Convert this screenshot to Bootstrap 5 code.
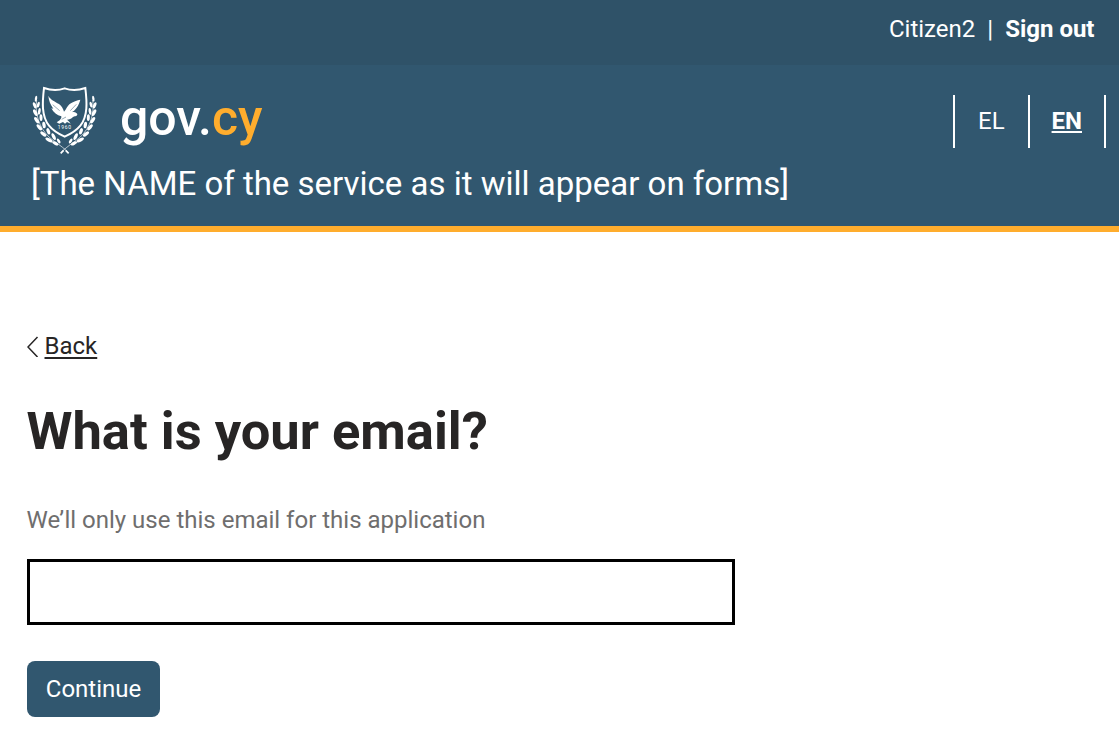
<!DOCTYPE html>
<html lang="en">
<head>
<meta charset="utf-8">
<meta name="viewport" content="width=device-width, initial-scale=1">
<title>What is your email?</title>
<link href="https://cdn.jsdelivr.net/npm/bootstrap@5.3.0/dist/css/bootstrap.min.css" rel="stylesheet">
<style>
  body { font-family: Roboto, sans-serif; font-size: 24px; line-height: 36px; color: #272525; overflow: hidden; }
  .user-bar { height: 65px; background: #2f5268; padding: 11px 24.500px 0 0; }
  .user-bar .divider { margin: 0 12px; }
  .site-header { height: 167px; background: #31576f; border-bottom: 6px solid #ffad2d; padding: 21px 13px 0 32px; }
  .wordmark { font-size: 50px; line-height: 60px; font-weight: 500; margin-left: 23px; margin-top: 2px; }
  .wordmark span { color: #ffad2d; }
  .service-name { font-size: 33px; line-height: 40px; margin: 9px 0 0 -1px; }
  .languages { margin-top: 9px; height: 53px; border-left: 2px solid #fff; }
  .languages a { border-right: 2px solid #fff; padding: 8px 22px 0; color: #fff; }
  .languages a:first-child { padding: 8px 23px 0; }
  .page-main { padding: 96px 27px 0; }
  .back-link { color: #272525; text-underline-offset: 3px; margin-left: 5.500px; }
  h1 { font-size: 52.500px; line-height: 64px; font-weight: 700; margin: 35px 0 0 -.5px; }
  .hint { color: #6f6e6e; margin: 39px 0 21px -.5px; }
  .email-field { width: 708px; height: 66px; border: 3px solid #000; border-radius: 0; }
  .btn-continue { width: 133px; height: 56px; margin-top: 36px; padding: 0; border: 0; border-radius: 8px; background: #31576f; color: #fff; font-size: 24px; }
</style>
</head>
<body>
<div class="user-bar d-flex justify-content-end text-white">
  <span>Citizen2</span><span class="divider">|</span><a href="#" class="fw-bold text-white text-decoration-none">Sign out</a>
</div>
<header class="site-header text-white">
  <div class="d-flex justify-content-between align-items-start">
    <a href="#" class="d-flex text-white text-decoration-none">
      <svg width="65" height="69" viewBox="24 24 195 207" fill="#fff" aria-hidden="true">
        <path d="M60 30Q93 42 122 31Q151 42 184 30C189 72 192 114 169 143C157 158 140 168 122 176C104 168 87 158 75 143C52 114 55 72 60 30Z" fill="none" stroke="#fff" stroke-width="6"/>
        <path d="M73 53C79 65 92 70 105 78C114 84 118 94 120 101C126 95 130 84 137 78C147 70 160 67 169 65C165 82 154 97 143 103C151 99 161 105 160 110C158 116 151 113 147 117C142 123 135 125 129 125C133 128 137 132 140 137L129 132L123 137L117 132L106 137L98 133L107 127C110 123 113 120 112 115C99 112 89 104 82 91L88 92C80 81 74 67 73 53Z"/>
        <path d="M86 80L107 98M157 79L139 98M113 124L126 117" fill="none" stroke="#31576f" stroke-width="1.500"/>
        <text x="122.500" y="153" text-anchor="middle" font-family="Roboto, sans-serif" font-size="15" letter-spacing="2">1960</text>
        <g id="branch">
          <path d="M38 66C32 105 45 149 75 177C91 191 109 201 132 222" fill="none" stroke="#fff" stroke-width="2"/>
          <path d="M110 226L119 217" stroke="#fff" stroke-width="5"/>
          <ellipse cx="36" cy="62" rx="3.500" ry="9" transform="rotate(8 36 62)"/>
          <ellipse cx="32" cy="82" rx="4.500" ry="10" transform="rotate(-20 32 82)"/>
          <ellipse cx="43" cy="80" rx="4" ry="9" transform="rotate(15 43 80)"/>
          <ellipse cx="34" cy="104" rx="5" ry="11" transform="rotate(-28 34 104)"/>
          <ellipse cx="46" cy="100" rx="4" ry="10" transform="rotate(8 46 100)"/>
          <ellipse cx="38" cy="127" rx="5" ry="11" transform="rotate(-35 38 127)"/>
          <ellipse cx="51" cy="119" rx="4.500" ry="10" transform="rotate(-3 51 119)"/>
          <ellipse cx="46" cy="148" rx="5" ry="11" transform="rotate(-42 46 148)"/>
          <ellipse cx="60" cy="141" rx="5" ry="10" transform="rotate(-8 60 141)"/>
          <ellipse cx="58" cy="168" rx="5" ry="11" transform="rotate(-50 58 168)"/>
          <ellipse cx="73" cy="160" rx="5" ry="10" transform="rotate(-18 73 160)"/>
          <ellipse cx="75" cy="186" rx="5" ry="12" transform="rotate(-60 75 186)"/>
          <ellipse cx="89" cy="176" rx="5" ry="11" transform="rotate(-25 89 176)"/>
          <ellipse cx="94" cy="196" rx="4.500" ry="10" transform="rotate(-62 94 196)"/>
          <ellipse cx="104" cy="189" rx="4" ry="8" transform="rotate(-35 104 189)"/>
        </g>
        <use href="#branch" transform="matrix(-1 0 0 1 244 0)"/>
      </svg>
      <span class="wordmark">gov.<span>cy</span></span>
    </a>
    <nav class="languages d-flex">
      <a href="#" class="text-decoration-none">EL</a>
      <a href="#" class="fw-bold">EN</a>
    </nav>
  </div>
  <div class="service-name text-nowrap">[The NAME of the service as it will appear on forms]</div>
</header>
<main class="page-main">
  <div class="d-flex align-items-center">
    <svg width="12" height="22" viewBox="0 0 12 22" fill="none" stroke="#272525" stroke-width="1.500" aria-hidden="true"><path d="M10.500 2L1 12L10.500 22"/></svg>
    <a href="#" class="back-link">Back</a>
  </div>
  <h1>What is your email?</h1>
  <p class="hint">We’ll only use this email for this application</p>
  <input type="email" class="form-control email-field" aria-label="What is your email?">
  <button type="button" class="btn btn-continue">Continue</button>
</main>
<script src="https://cdn.jsdelivr.net/npm/bootstrap@5.3.0/dist/js/bootstrap.bundle.min.js"></script>
</body>
</html>
